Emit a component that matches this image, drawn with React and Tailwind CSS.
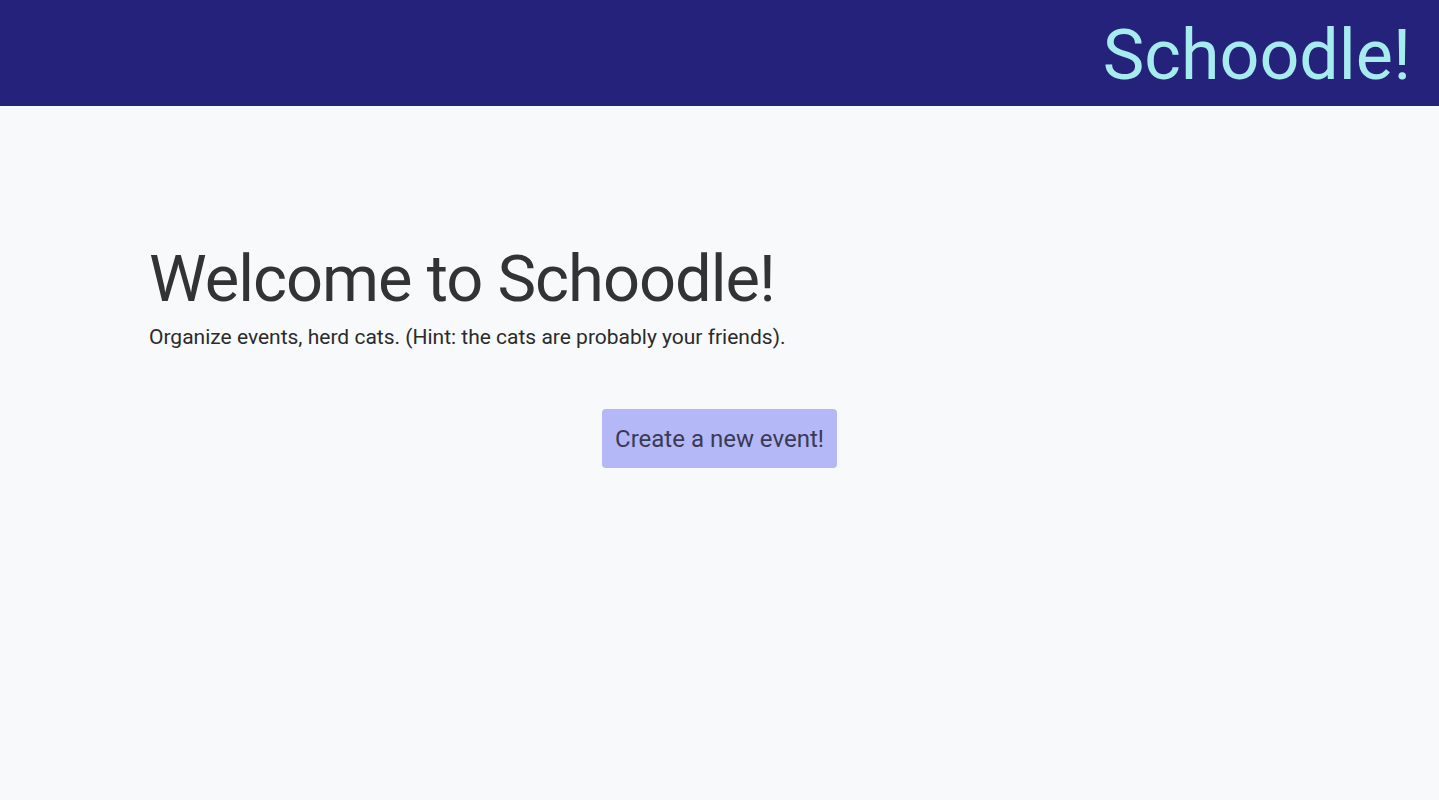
export default function App() {
  return (
    <div className="min-h-screen bg-[#f8f9fb] font-['Roboto',sans-serif]">
      {/* Header */}
      <header className="h-[106px] bg-[#25227c] flex items-center justify-end pr-[28px] pt-[4px]">
        <span className="text-[#a6ecee] text-[70px] leading-none">Schoodle!</span>
      </header>

      {/* Hero */}
      <main className="pt-[137px] px-[149px]">
        <h1 className="text-[#333333] text-[65px] leading-[72px] tracking-[-1px]">Welcome to Schoodle!</h1>
        <p className="text-[#2b2b2b] text-[21px] leading-[28px] mt-[8px]">
          Organize events, herd cats. (Hint: the cats are probably your friends).
        </p>
      </main>

      <div className="flex justify-center mt-[58px]">
        <button className="bg-[#b4b8f7] text-[#3a3a55] text-[24px] rounded h-[59px] px-[13px]">
          Create a new event!
        </button>
      </div>
    </div>
  );
}
